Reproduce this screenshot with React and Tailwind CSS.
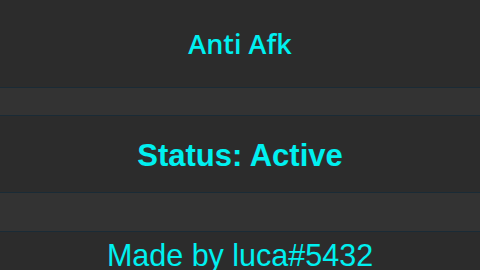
import React from 'react';

const App = () => {
  return (
    <div className="w-[480px] h-[270px] overflow-hidden bg-[#2c2c2c] flex flex-col text-[#00f0f0]">
      <div className="h-[88px] shrink-0 flex items-center justify-center border-b border-[#1a2b36]">
        <h1 className="text-[27px] font-semibold leading-none" style={{ fontFamily: '"Open Sans", sans-serif' }}>Anti Afk</h1>
      </div>
      <div className="h-[28px] shrink-0 bg-[#333333] border-b border-[#1a2b36]" />
      <div className="h-[77px] shrink-0 flex items-center justify-center border-b border-[#1a2b36]">
        <p className="text-[31px] font-bold leading-none pt-[2px]" style={{ fontFamily: '"Liberation Sans", Arial, sans-serif' }}>Status: Active</p>
      </div>
      <div className="h-[39px] shrink-0 bg-[#333333] border-b border-[#1a2b36]" />
      <div className="flex justify-center pt-[3px]">
        <p className="text-[30.5px] leading-[40px]" style={{ fontFamily: '"Liberation Sans", Arial, sans-serif' }}>Made by luca#5432</p>
      </div>
    </div>
  );
};

export default App;
